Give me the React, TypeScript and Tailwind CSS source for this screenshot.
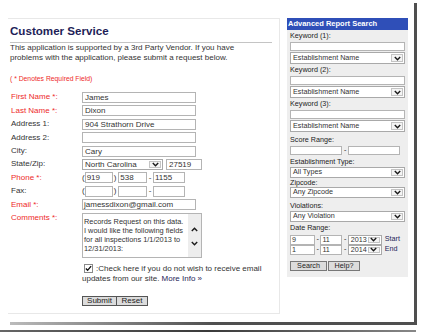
import React from 'react';

const box = 'border border-[#b4b4b4] bg-white';

function Chevron({ dir = 'down' }: { dir?: 'up' | 'down' }) {
  return (
    <svg width="7" height="5" viewBox="0 0 7 5">
      <path
        d={dir === 'down' ? 'M0.8 1 L3.5 3.8 L6.2 1' : 'M0.8 4 L3.5 1.2 L6.2 4'}
        fill="none"
        stroke="#1a1a1a"
        strokeWidth="1.4"
      />
    </svg>
  );
}

function Select({ text, className }: { text: string; className: string }) {
  return (
    <div className={`flex items-stretch border border-[#a9a9a9] bg-white ${className}`}>
      <span className="flex-1 pl-[2px] overflow-hidden whitespace-nowrap flex items-center text-[#333]">{text}</span>
      <span className="w-[12px] m-px border border-[#c4c4c4] bg-[#f4f4f4] flex items-center justify-center">
        <Chevron />
      </span>
    </div>
  );
}

const rows = [
  { label: 'First Name *:', req: true, value: 'James' },
  { label: 'Last Name *:', req: true, value: 'Dixon' },
  { label: 'Address 1:', value: '904 Strathorn Drive' },
  { label: 'Address 2:', value: '' },
  { label: 'City:', value: 'Cary' },
];

function Row({ label, req, children }: { label: string; req?: boolean; children: React.ReactNode }) {
  return (
    <div className="flex items-center h-[13.4px]">
      <span className={`w-[72px] pl-px ${req ? 'text-[#ee2a2a]' : 'text-[#333]'}`}>{label}</span>
      {children}
    </div>
  );
}

function Keyword({ n }: { n: number }) {
  return (
    <div className="mb-px">
      <div className="leading-[10px]">Keyword ({n}):</div>
      <div className={`h-[9px] ${box} mt-px`} />
      <Select text="Establishment Name" className="h-[12px] mt-px" />
    </div>
  );
}

export default function App() {
  return (
    <div className="w-[421px] h-[334px] bg-white overflow-hidden font-['Liberation_Sans',Arial,sans-serif]">
      <div className="mt-[3px] w-[417px] h-[319px] border-r-[3px] border-[#4f4f4f] pt-[15px] flex">
        {/* Left: customer service form */}
        <div className="ml-[8px] w-[272px] h-[296px] border-t border-r border-b border-[#e8e8e8] pl-[2px] text-[8px]">
          <h1 className="mt-[5px] text-[11.6px] leading-[14px] font-bold text-[#1e1e58]">Customer Service</h1>
          <div className="mt-[4px] h-px w-[262px] bg-[#c4c4c4]" />
          <p className="leading-[10px] text-[#333]">
            This application is supported by a 3rd Party Vendor. If you have
            <br />
            problems with the application, please submit a request below.
          </p>
          <p className="mt-[10.5px] text-[6.8px] leading-[9px] text-[#ee2a2a]">( * Denotes Required Field)</p>

          <div className="mt-[8.3px] leading-[10px]">
            {rows.map((r) => (
              <Row key={r.label} label={r.label} req={r.req}>
                <div className={`w-[114px] h-[11px] ${box} pl-[2px] leading-[9px] text-[#333]`}>{r.value}</div>
              </Row>
            ))}
            <Row label="State/Zip:">
              <Select text="North Carolina" className="w-[81px] h-[11px] leading-[9px]" />
              <div className={`ml-[3px] w-[36px] h-[11px] ${box} pl-[2px] leading-[9px] text-[#333]`}>27519</div>
            </Row>
            <Row label="Phone *:" req>
              <span className="text-[#333]">(</span>
              <div className={`w-[28px] h-[11px] ${box} pl-px leading-[9px] text-[#333]`}>919</div>
              <span className="ml-px text-[#333]">)</span>
              <div className={`ml-[2px] w-[29px] h-[11px] ${box} pl-px leading-[9px] text-[#333]`}>538</div>
              <span className="mx-[1.5px] text-[#333]">-</span>
              <div className={`w-[32px] h-[11px] ${box} pl-px leading-[9px] text-[#333]`}>1155</div>
            </Row>
            <Row label="Fax:">
              <span className="text-[#333]">(</span>
              <div className={`w-[28px] h-[11px] ${box}`} />
              <span className="ml-px text-[#333]">)</span>
              <div className={`ml-[2px] w-[29px] h-[11px] ${box}`} />
              <span className="mx-[1.5px] text-[#333]">-</span>
              <div className={`w-[32px] h-[11px] ${box}`} />
            </Row>
            <Row label="Email *:" req>
              <div className={`w-[114px] h-[11px] ${box} pl-px leading-[9px] text-[#333]`}>jamessdixon@gmail.com</div>
            </Row>
          </div>

          <div className="mt-[1.6px] flex">
            <span className="w-[72px] pl-px mt-[0.5px] leading-[9px] text-[#ee2a2a]">Comments *:</span>
            <div className={`w-[120px] h-[45px] ${box} flex`}>
              <div className="flex-1 pl-px pt-[3px] text-[7.4px] leading-[9px] text-[#333] whitespace-nowrap overflow-hidden">
                Records Request on this data.
                <br />
                I would like the following fields
                <br />
                for all inspections 1/1/2013 to
                <br />
                12/31/2013:
              </div>
              <div className="w-[13px] bg-[#ededed] flex flex-col items-center pt-[13px] gap-[9px]">
                <Chevron dir="up" />
                <Chevron />
              </div>
            </div>
          </div>

          <div className="mt-[6px] ml-[72px] leading-[10px] text-[#333]">
            <span className="inline-flex align-[-1px] ml-[2px] mr-[3px] w-[9px] h-[9px] border border-[#8a8a8a] bg-white items-center justify-center">
              <svg width="8" height="7" viewBox="0 0 8 7">
                <path d="M1 3.6 L3 5.6 L7 0.8" fill="none" stroke="#111" strokeWidth="1.6" />
              </svg>
            </span>
            :Check here if you do not wish to receive email
            <br />
            updates from our site. <span className="text-[#1e1e58]">More Info »</span>
          </div>

          <div className="mt-[12px] ml-[72px] flex leading-[8px] text-[#222]">
            <button className="w-[35px] h-[10px] bg-[#dcdcdc] border border-[#555] leading-[8px]">Submit</button>
            <button className="w-[31px] h-[10px] bg-[#dcdcdc] border border-[#555] border-l-0 leading-[8px]">Reset</button>
          </div>
        </div>

        {/* Right: advanced search */}
        <div className="ml-[7px] w-[121px] h-[259px] flex flex-col text-[7.2px] text-[#222]">
          <div className="h-[12px] bg-[#2f4fb8] text-white font-bold text-[7.5px] leading-[12px] pl-px">Advanced Report Search</div>
          <div className="flex-1 bg-[#eeeeee] px-[3px] pt-px">
            <Keyword n={1} />
            <Keyword n={2} />
            <Keyword n={3} />
            <div className="leading-[10px] mt-[3px]">Score Range:</div>
            <div className="flex items-center">
              <div className={`w-[52px] h-[9px] ${box}`} />
              <span className="mx-[2px]">-</span>
              <div className={`w-[52px] h-[9px] ${box}`} />
            </div>
            <div className="leading-[10px] mt-px">Establishment Type:</div>
            <Select text="All Types" className="h-[11px]" />
            <div className="leading-[9px]">Zipcode:</div>
            <Select text="Any Zipcode" className="h-[11px]" />
            <div className="leading-[10px] mt-[3px]">Violations:</div>
            <Select text="Any Violation" className="h-[11px]" />
            <div className="leading-[10px] mt-px">Date Range:</div>
            <div className="mt-[2px]">
              {[
                ['9', '11', '2013', 'Start'],
                ['1', '11', '2014', 'End'],
              ].map(([m, d, y, l]) => (
                <div key={l} className="flex items-center h-[10px]">
                  <div className={`w-[25px] h-[10px] ${box} pl-px leading-[8px] text-[#333]`}>{m}</div>
                  <span className="mx-[1.5px]">-</span>
                  <div className={`w-[22px] h-[10px] ${box} pl-px leading-[8px] text-[#333]`}>{d}</div>
                  <span className="mx-[1.5px]">-</span>
                  <Select text={y} className="w-[34px] h-[10px] leading-[8px]" />
                  <span className="ml-[3px] text-[#1e1e58]">{l}</span>
                </div>
              ))}
            </div>
            <div className="mt-[6px] flex gap-px leading-[8px]">
              <button className="w-[37px] h-[10px] bg-[#dcdcdc] border border-[#777] leading-[8px]">Search</button>
              <button className="w-[32px] h-[10px] bg-[#dcdcdc] border border-[#777] leading-[8px]">Help?</button>
            </div>
          </div>
        </div>
      </div>
      <div className="ml-[10px] w-[407px] h-[3px] bg-gradient-to-r from-[#bbbbbb] via-[#4f4f4f] to-[#4f4f4f]" />
      <div className="mt-[5px] w-[416px] h-[2px] bg-gradient-to-r from-[#666] via-[#3a3a3a] to-[#888]" />
    </div>
  );
}
